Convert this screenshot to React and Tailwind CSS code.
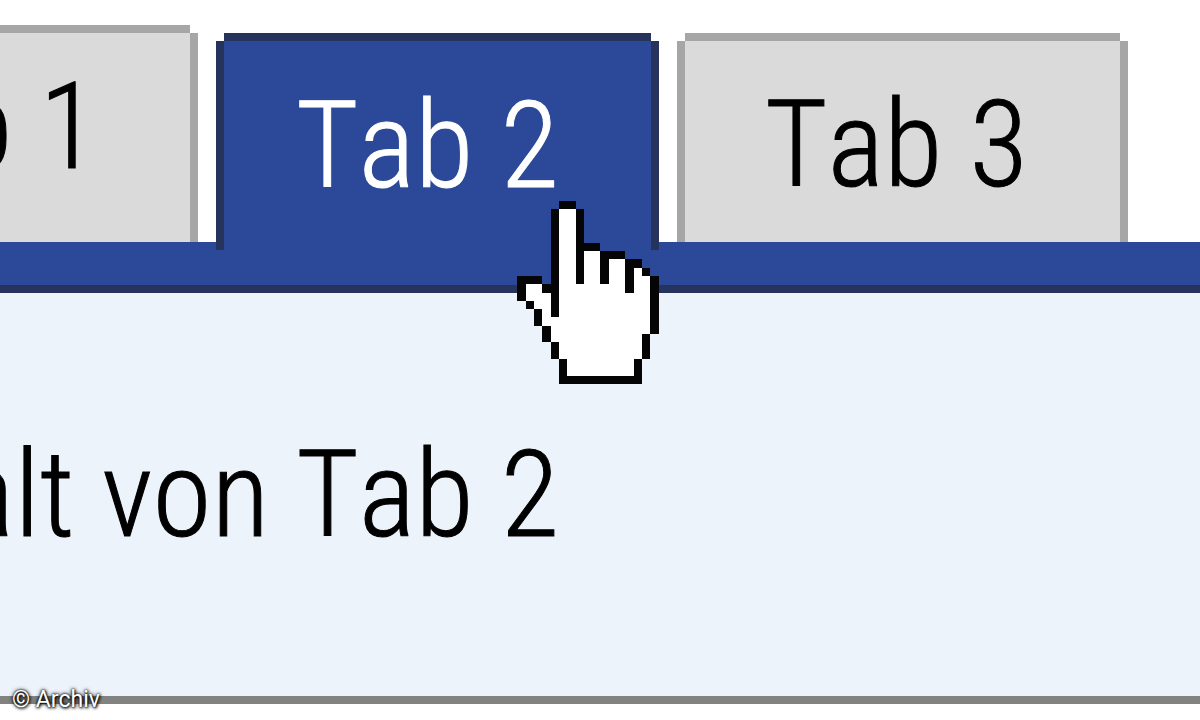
import React, { useState } from "react";

const tabs = [
  {
    id: 1,
    label: "Tab 1",
    className: "w-[443px] h-[217px] pl-[72px] pb-[22px]",
  },
  {
    id: 2,
    label: "Tab 2",
    className: "w-[443px] h-[217px] pl-[72px]",
  },
  {
    id: 3,
    label: "Tab 3",
    className: "w-[451px] h-[209px] pl-[80px] pt-[6px]",
  },
];

// X = outline, o = fill
const handPixels = [
  ".....XX..........",
  "....XooX.........",
  "....XooX.........",
  "....XooX.........",
  "....XooX.........",
  "....XooXXX.......",
  "....XooXooXXX....",
  "....XooXooXooXX..",
  "....XooXooXooXoX.",
  "XXX.XooXooXooXooX",
  "XooXXooooooooXooX",
  "XoooXoooooooooooX",
  ".XooXoooooooooooX",
  "..XoXoooooooooooX",
  "..XoooooooooooooX",
  "...XooooooooooooX",
  "...XoooooooooooX.",
  "....XooooooooooX.",
  "....XooooooooooX.",
  ".....XooooooooX..",
  ".....XooooooooX..",
  ".....XXXXXXXXXX..",
];

function HandCursor() {
  return (
    <svg
      viewBox="0 0 17 22"
      width="142"
      height="183"
      shapeRendering="crispEdges"
      aria-hidden="true"
      className="pointer-events-none absolute left-[301px] top-[168px] z-20"
    >
      {handPixels.map((row, y) =>
        row.split("").map((p, x) =>
          p === "." ? null : (
            <rect
              key={`${x}-${y}`}
              x={x}
              y={y}
              width="1"
              height="1"
              fill={p === "X" ? "#050505" : "#ffffff"}
            />
          )
        )
      )}
    </svg>
  );
}

function App() {
  const [active, setActive] = useState(2);

  return (
    <div className="relative flex h-screen flex-col overflow-hidden bg-white pb-4 font-['Roboto_Condensed','Liberation_Sans',sans-serif] text-[120px] leading-[120px] font-light whitespace-nowrap text-black [font-kerning:none]">
      <div
        role="tablist"
        className="-ml-[245px] flex h-[242px] shrink-0 items-end gap-[18px]"
      >
        {tabs.map((tab) => (
          <div
            key={tab.id}
            className={
              tab.id === active ? "relative z-10 -mb-2 shrink-0" : "relative shrink-0"
            }
          >
            <button
              type="button"
              role="tab"
              id={`tab-${tab.id}`}
              aria-selected={tab.id === active}
              aria-controls="panel"
              onClick={() => setActive(tab.id)}
              className={`${tab.className} block border-8 border-b-0 text-left [-webkit-text-stroke:1px_currentColor] [clip-path:polygon(8px_0,calc(100%-8px)_0,calc(100%-8px)_8px,100%_8px,100%_100%,0_100%,0_8px,8px_8px)] ${
                tab.id === active
                  ? "border-[#25335d] bg-[#2b4998] text-white"
                  : "border-[#a6a6a6] bg-[#dadada]"
              }`}
            >
              {tab.label}
            </button>
            {tab.id === 2 && <HandCursor />}
          </div>
        ))}
      </div>

      <div className="h-[51px] shrink-0 border-b-8 border-[#25335d] bg-[#2b4998]" />

      <div
        role="tabpanel"
        id="panel"
        aria-labelledby={`tab-${active}`}
        className="flex-1 border-b-8 border-[#80837f] bg-[#edf3fb] [-webkit-text-stroke:1px_currentColor]"
      >
        <p className="-ml-[187px] pt-[142px]">Inhalt von Tab {active}</p>
      </div>

      <small className="absolute bottom-[6px] left-3 font-['Roboto',sans-serif] text-[23px] leading-7 font-normal text-white [text-shadow:0_0_2px_#000,0_0_4px_#000,1px_1px_3px_#000]">
        © Archiv
      </small>
    </div>
  );
}

export default App;
